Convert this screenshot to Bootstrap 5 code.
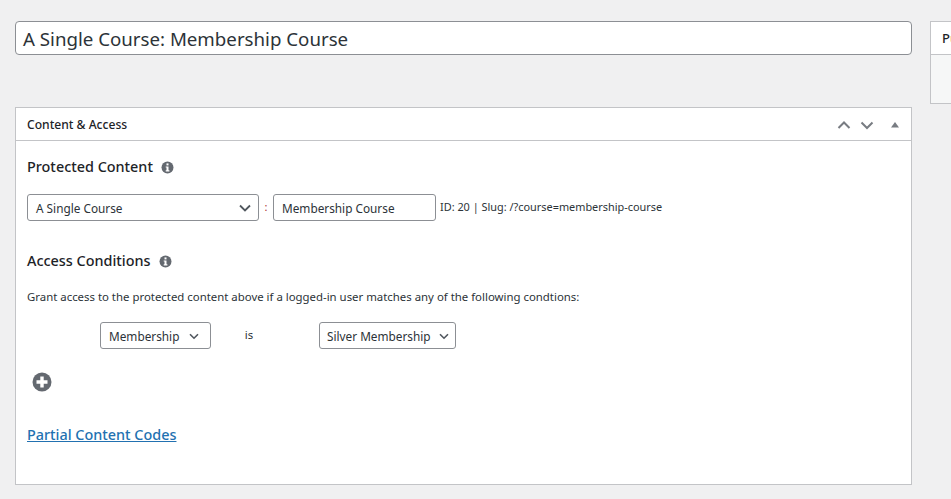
<!DOCTYPE html>
<html lang="en">

<head>
    <meta charset="UTF-8">
    <title>Edit Access Rule</title>
    <link rel="stylesheet" href="https://cdn.jsdelivr.net/npm/bootstrap@5.3.3/dist/css/bootstrap.min.css">
    <style>
        body {
            background-color: #f0f0f1;
            color: #2c3338;
            font-family: "Noto Sans", "Open Sans", sans-serif;
            font-size: 12px;
            overflow: hidden;
            height: 499px;
        }

        .page-wrap {
            display: flex;
            gap: 18px;
            padding: 21px 0 0 15px;
            width: 951px;
        }

        .main-col {
            width: 897px;
            flex-shrink: 0;
        }

        .side-col {
            flex-grow: 1;
            min-width: 0;
        }

        .title-input {
            display: block;
            width: 100%;
            height: 34px;
            border: 1px solid #8c8f94;
            border-radius: 4px;
            background: #fff;
            color: #2c3338;
            font-size: 18.7px;
            line-height: 34px;
            padding: 0 7px;
            margin-bottom: 52px;
        }

        .meta-box {
            background: #fff;
            border: 1px solid #c3c4c7;
            border-radius: 0;
        }

        .meta-head {
            height: 33px;
            padding: 2px 11px 0;
            border-bottom: 1px solid #c3c4c7;
            background: #fff;
            color: #1d2327;
            font-size: 12.1px;
            font-weight: 500;
        }

        .meta-body {
            height: 343px;
            padding: 16px 11px 0;
        }

        .head-btn {
            display: block;
            fill: none;
            stroke: #787c82;
            stroke-width: 2;
        }

        .head-btn-next {
            margin-left: 9px;
        }

        .head-toggle {
            margin-left: 16px;
        }

        .sect-title {
            color: #1d2327;
            font-size: 14.4px;
            font-weight: 500;
            line-height: 20px;
            margin: 0;
        }

        .info-dot {
            margin-left: 8px;
            margin-top: 4px;
            flex-shrink: 0;
        }

        .wp-field {
            height: 27px;
            border: 1px solid #8c8f94;
            border-radius: 3px;
            background: #fff;
            color: #2c3338;
            font-size: 11.8px;
            line-height: 27px;
            padding: 0 8px;
            white-space: nowrap;
        }

        .wp-select {
            padding-top: 1px;
            padding-right: 7px;
        }

        .wp-select svg {
            flex-shrink: 0;
        }

        .pick-type { width: 232px; }
        .pick-course { width: 163px; }
        .pick-member { width: 111px; }
        .pick-level { width: 137px; padding-left: 7px; padding-right: 6px; }

        .colon-sep {
            width: 14px;
            text-align: center;
            color: #a33;
            font-size: 11px;
            line-height: 26px;
            height: 27px;
        }

        .id-note {
            font-size: 10.9px;
            line-height: 26px;
            margin-left: 4px;
            white-space: nowrap;
        }

        .course-row {
            margin-top: 17px;
        }

        .access-head {
            margin-top: 30px;
        }

        .grant-note {
            font-size: 11.4px;
            line-height: 16px;
            margin: 18px 0 0;
        }

        .cond-row {
            margin-top: 17px;
            padding-left: 73px;
        }

        .cond-is {
            width: 108px;
            padding-right: 32px;
            text-align: center;
            font-size: 11.4px;
            margin-top: -1px;
        }

        .add-cond {
            margin-top: 23px;
            padding-left: 5px;
        }

        .partial-wrap {
            margin-top: 33px;
        }

        .partial-link {
            color: #2271b1;
            font-size: 14.4px;
            font-weight: 500;
            line-height: 20px;
        }

        .side-head {
            height: 33px;
            padding-left: 11px;
            border-bottom: 1px solid #c3c4c7;
            background: #fff;
            color: #1d2327;
            font-size: 13px;
            font-weight: 500;
            line-height: 32px;
            white-space: nowrap;
            overflow: hidden;
        }

        .side-box {
            height: 83px;
            width: 40px;
            border: 1px solid #c3c4c7;
            border-right: 0;
            background: #f6f7f7;
        }
    </style>
</head>

<body>
    <div class="page-wrap">
        <div class="main-col">
            <div class="title-input">A Single Course: Membership Course</div>

            <div class="meta-box">
                <div class="meta-head d-flex align-items-center justify-content-between">
                    <span>Content &amp; Access</span>
                    <div class="d-flex align-items-center">
                        <svg class="head-btn" width="14" height="10" viewBox="0 0 14 10"><path d="M1.500 8 7 2.500 12.500 8"/></svg>
                        <svg class="head-btn head-btn-next" width="14" height="10" viewBox="0 0 14 10"><path d="M1.500 2.500 7 8 12.500 2.500"/></svg>
                        <svg class="head-toggle" width="10" height="8" viewBox="0 0 10 8"><path d="M5 1 9 6.500H1z" fill="#787c82"/></svg>
                    </div>
                </div>

                <div class="meta-body">
                    <div class="d-flex align-items-start">
                        <h2 class="sect-title">Protected Content</h2>
                        <svg class="info-dot" width="13" height="13" viewBox="0 0 13 13"><circle cx="6.500" cy="6.500" r="6" fill="#646970"/><rect x="5.500" y="2.400" width="2" height="2" fill="#fff"/><path d="M4.700 5.400H7.500V9.300H8.400V10.500H4.700V9.300H5.500V6.600H4.700z" fill="#fff"/></svg>
                    </div>

                    <div class="course-row d-flex align-items-start">
                        <div class="wp-field wp-select pick-type d-flex align-items-center justify-content-between">
                            <span>A Single Course</span>
                            <svg width="12" height="8" viewBox="0 0 12 8"><path d="M1 1.500 6 6.500 11 1.500" fill="none" stroke="#50575e" stroke-width="1.800"/></svg>
                        </div>
                        <span class="colon-sep">:</span>
                        <div class="wp-field pick-course">Membership Course</div>
                        <span class="id-note">ID: 20 | Slug: /?course=membership-course</span>
                    </div>

                    <div class="access-head d-flex align-items-start">
                        <h2 class="sect-title">Access Conditions</h2>
                        <svg class="info-dot" width="13" height="13" viewBox="0 0 13 13"><circle cx="6.500" cy="6.500" r="6" fill="#646970"/><rect x="5.500" y="2.400" width="2" height="2" fill="#fff"/><path d="M4.700 5.400H7.500V9.300H8.400V10.500H4.700V9.300H5.500V6.600H4.700z" fill="#fff"/></svg>
                    </div>

                    <p class="grant-note">Grant access to the protected content above if a logged-in user matches any of the following condtions:</p>

                    <div class="cond-row d-flex align-items-center">
                        <div class="wp-field wp-select pick-member d-flex align-items-center justify-content-between">
                            <span>Membership</span>
                            <svg class="me-1" width="10" height="7" viewBox="0 0 10 7"><path d="M1 1.200 5 5.200 9 1.200" fill="none" stroke="#50575e" stroke-width="1.600"/></svg>
                        </div>
                        <div class="cond-is">is</div>
                        <div class="wp-field wp-select pick-level d-flex align-items-center justify-content-between">
                            <span>Silver Membership</span>
                            <svg width="10" height="7" viewBox="0 0 10 7"><path d="M1 1.200 5 5.200 9 1.200" fill="none" stroke="#50575e" stroke-width="1.600"/></svg>
                        </div>
                    </div>

                    <div class="add-cond">
                        <svg class="d-block" width="20" height="20" viewBox="0 0 20 20"><circle cx="10" cy="10" r="9.500" fill="#646970"/><path d="M8.300 4.500H11.700V8.300H15.500V11.700H11.700V15.500H8.300V11.700H4.500V8.300H8.300z" fill="#fff"/></svg>
                    </div>

                    <div class="partial-wrap">
                        <a href="#" class="partial-link">Partial Content Codes</a>
                    </div>
                </div>
            </div>
        </div>

        <div class="side-col">
            <div class="side-box">
                <div class="side-head">Publish</div>
            </div>
        </div>
    </div>
</body>

</html>
